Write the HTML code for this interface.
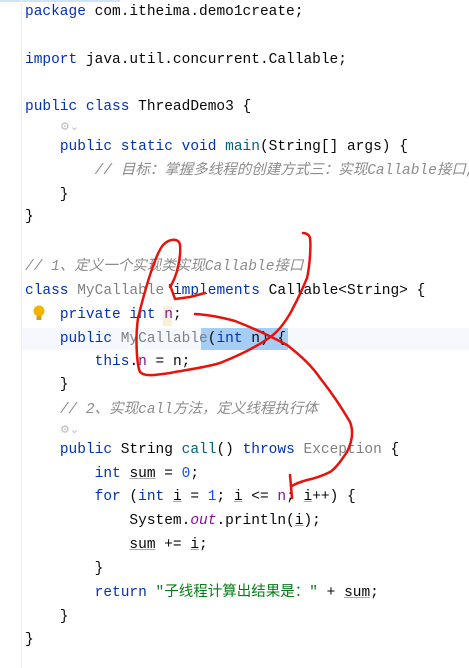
<!DOCTYPE html>
<html><head><meta charset="utf-8"><style>
body{margin:0;width:469px;height:668px;background:#fff;position:relative;overflow:hidden;font-family:"Liberation Mono","Noto Sans CJK SC",monospace;font-size:14.5px;color:#080808}
.l{position:absolute;height:22px;line-height:22px;white-space:pre}
.k{color:#0033b3}.c{color:#8c8c8c;font-style:italic}.g{color:#808080}.f{color:#00627a}.p{color:#871094}.s{color:#067d17}.n{color:#1750eb}.u{text-decoration:underline;text-decoration-color:#aaa}
.ic{position:absolute;color:#bbb;font-size:11px}
</style></head><body>
<div style="position:absolute;left:0;top:0;width:120px;height:2px;background:#cfe3fb"></div>
<div style="position:absolute;left:21px;top:0;width:1px;height:668px;background:#eee"></div>
<div style="position:absolute;left:22px;top:328px;width:447px;height:22px;background:#f5f8fe"></div>
<div style="position:absolute;left:201px;top:328px;width:87px;height:22px;background:#a6cdf5"></div>
<div style="position:absolute;left:163px;top:306px;width:9px;height:20px;background:#f7f0d8"></div>
<div class="l" style="left:25px;top:1px"><span class="k">package</span> com.itheima.demo1create;</div>
<div class="l" style="left:25px;top:49px"><span class="k">import</span> java.util.concurrent.Callable;</div>
<div class="l" style="left:25px;top:96px"><span class="k">public class</span> ThreadDemo3 {</div>
<div class="ic" style="left:60px;top:120px">⚙⌄</div>
<div class="l" style="left:25px;top:136px">    <span class="k">public static void</span> <span class="f">main</span>(String[] args) {</div>
<div class="l" style="left:25px;top:160px">        <span class="c">// 目标：掌握多线程的创建方式三：实现Callable接口,</span></div>
<div class="l" style="left:25px;top:184px">    }</div>
<div class="l" style="left:25px;top:206px">}</div>
<div class="l" style="left:25px;top:256px"><span class="c">// 1、定义一个实现类实现Callable接口</span></div>
<div class="l" style="left:25px;top:280px"><span class="k">class</span> <span class="g">MyCallable</span> <span class="k">implements</span> Callable&lt;String&gt; {</div>
<svg width="14" height="18" style="position:absolute;left:32px;top:305px"><circle cx="7" cy="6" r="5.5" fill="#f2b400"/><rect x="4.5" y="11" width="5" height="4" fill="#c9a227"/></svg>
<div class="l" style="left:25px;top:304px">    <span class="k">private int</span> <span class="p">n</span>;</div>
<div class="l" style="left:25px;top:328px">    <span class="k">public</span> <span class="g">MyCallable</span>(<span class="k">int</span> n) {</div>
<div class="l" style="left:25px;top:351px">        <span class="k">this</span>.<span class="p">n</span> = n;</div>
<div class="l" style="left:25px;top:374px">    }</div>
<div class="l" style="left:25px;top:399px">    <span class="c">// 2、实现call方法，定义线程执行体</span></div>
<div class="ic" style="left:60px;top:423px">⚙⌄</div>
<div class="l" style="left:25px;top:439px">    <span class="k">public</span> String <span class="f">call</span>() <span class="k">throws</span> <span class="g">Exception</span> {</div>
<div class="l" style="left:25px;top:463px">        <span class="k">int</span> <span class="u">sum</span> = <span class="n">0</span>;</div>
<div class="l" style="left:25px;top:486px">        <span class="k">for</span> (<span class="k">int</span> <span class="u">i</span> = <span class="n">1</span>; <span class="u">i</span> &lt;= <span class="p">n</span>; <span class="u">i</span>++) {</div>
<div class="l" style="left:25px;top:510px">            System.<span class="p" style="font-style:italic">out</span>.println(<span class="u">i</span>);</div>
<div class="l" style="left:25px;top:534px">            <span class="u">sum</span> += <span class="u">i</span>;</div>
<div class="l" style="left:25px;top:558px">        }</div>
<div class="l" style="left:25px;top:582px">        <span class="k">return</span> <span class="s">"子线程计算出结果是："</span> + <span class="u">sum</span>;</div>
<div class="l" style="left:25px;top:606px">    }</div>
<div class="l" style="left:25px;top:629px">}</div>
<svg width="469" height="668" style="position:absolute;left:0;top:0" fill="none" stroke="#e8120c" stroke-width="2.5" stroke-linecap="round" stroke-linejoin="round">
<path d="M170,285 L175,299 L190,297 L205,293"/>
<path d="M170,287 C178,275 181,255 180,245 C179,238 170,238 163,245 C155,255 145,290 138,318 C135,340 137,365 140,372 C145,377 155,375 170,373 C185,370 203,368 220,363 C240,355 260,345 273,335 C285,325 293,308 293,308 C300,295 307,278 307,278 C310,265 311,245 310,238 C309,234 305,233 303,233"/>
<path d="M195,314 C210,315 220,317 235,321 C253,328 270,336 287,345 C300,355 312,366 320,378 C332,393 343,410 350,422 C354,432 352,442 347,452 C340,462 336,468 330,472 C320,477 312,479 307,480 C300,482 295,484 292,486"/>
<path d="M290,475 L292,498"/>
</svg>
</body></html>
